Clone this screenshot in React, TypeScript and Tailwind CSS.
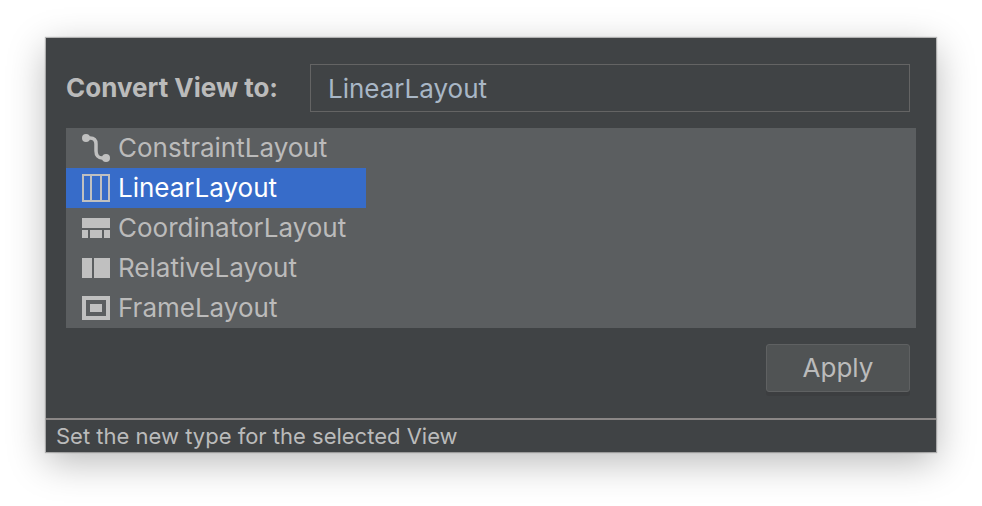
import { useState, type ReactNode } from "react";

type LayoutOption = { name: string; icon: ReactNode };

const options: LayoutOption[] = [
  {
    name: "ConstraintLayout",
    icon: (
      <>
        <circle cx="4" cy="4" r="4" />
        <circle cx="24" cy="24" r="4" />
        <path
          d="M4 4H8C12 4 14 6.500 14 10V17C14 21.500 16.500 24 20 24H24"
          fill="none"
          stroke="currentColor"
          strokeWidth="3.500"
        />
      </>
    ),
  },
  {
    name: "LinearLayout",
    icon: <path fillRule="evenodd" d="M0 0H28V28H0ZM2 2V26H8V2ZM10 2V26H18V2ZM20 2V26H26V2Z" />,
  },
  {
    name: "CoordinatorLayout",
    icon: <path d="M0 4H28V14H0ZM0 16H6V24H0ZM8 16H20V24H8ZM22 16H28V24H22Z" />,
  },
  {
    name: "RelativeLayout",
    icon: <path d="M0 4H10V24H0ZM12 4H28V24H12Z" />,
  },
  {
    name: "FrameLayout",
    icon: <path fillRule="evenodd" d="M0 2H28V26H0ZM4 6V22H24V6ZM8 10H20V18H8Z" />,
  },
];

export default function App() {
  const [selected, setSelected] = useState("LinearLayout");

  return (
    <main className="min-h-screen bg-white px-[46px] pt-[38px] pb-[54px] font-['Inter',sans-serif] text-[#bbbbbb]">
      <form
        className="bg-[#404345] shadow-[0_0_1px_1px_rgba(0,0,0,0.25),0_10px_36px_rgba(0,0,0,0.28)]"
        onSubmit={(event) => event.preventDefault()}
      >
        <div className="px-5 pt-[26px] pb-[26px]">
          <div className="mr-1.5 flex items-center">
            <label htmlFor="view-type" className="w-[244px] shrink-0 text-[26px] leading-8 font-bold whitespace-nowrap">
              Convert View to:
            </label>
            <input
              id="view-type"
              type="text"
              value={selected}
              onChange={(event) => setSelected(event.target.value)}
              className="h-12 min-w-0 flex-1 border border-[#646464] bg-transparent px-[17px] text-[26px] leading-8 text-[#a9b7c6] outline-none"
            />
          </div>

          <ul className="mt-4 bg-[#5b5e60]">
            {options.map((option) => {
              const active = option.name === selected;
              return (
                <li key={option.name}>
                  <button
                    type="button"
                    aria-pressed={active}
                    onClick={() => setSelected(option.name)}
                    className={
                      active
                        ? "flex h-10 w-[300px] items-center gap-2 bg-[#376cc9] px-4 text-[26px] leading-8 text-white"
                        : "flex h-10 w-[300px] items-center gap-2 px-4 text-[26px] leading-8"
                    }
                  >
                    <svg viewBox="0 0 28 28" className="size-7 shrink-0 text-[#c0c0c0]" fill="currentColor" aria-hidden="true">
                      {option.icon}
                    </svg>
                    {option.name}
                  </button>
                </li>
              );
            })}
          </ul>

          <div className="mt-4 mr-1.5 flex justify-end">
            <button
              type="submit"
              className="h-12 w-36 rounded-[3px] border border-[#5f6162] bg-[#505354] text-[26px] leading-8 shadow-[0_4px_0_#3c3e40]"
            >
              Apply
            </button>
          </div>
        </div>

        <p className="border-t-2 border-[#8b8786] px-2.5 text-[22px] leading-8 whitespace-nowrap">
          Set the new type for the selected View
        </p>
      </form>
    </main>
  );
}
